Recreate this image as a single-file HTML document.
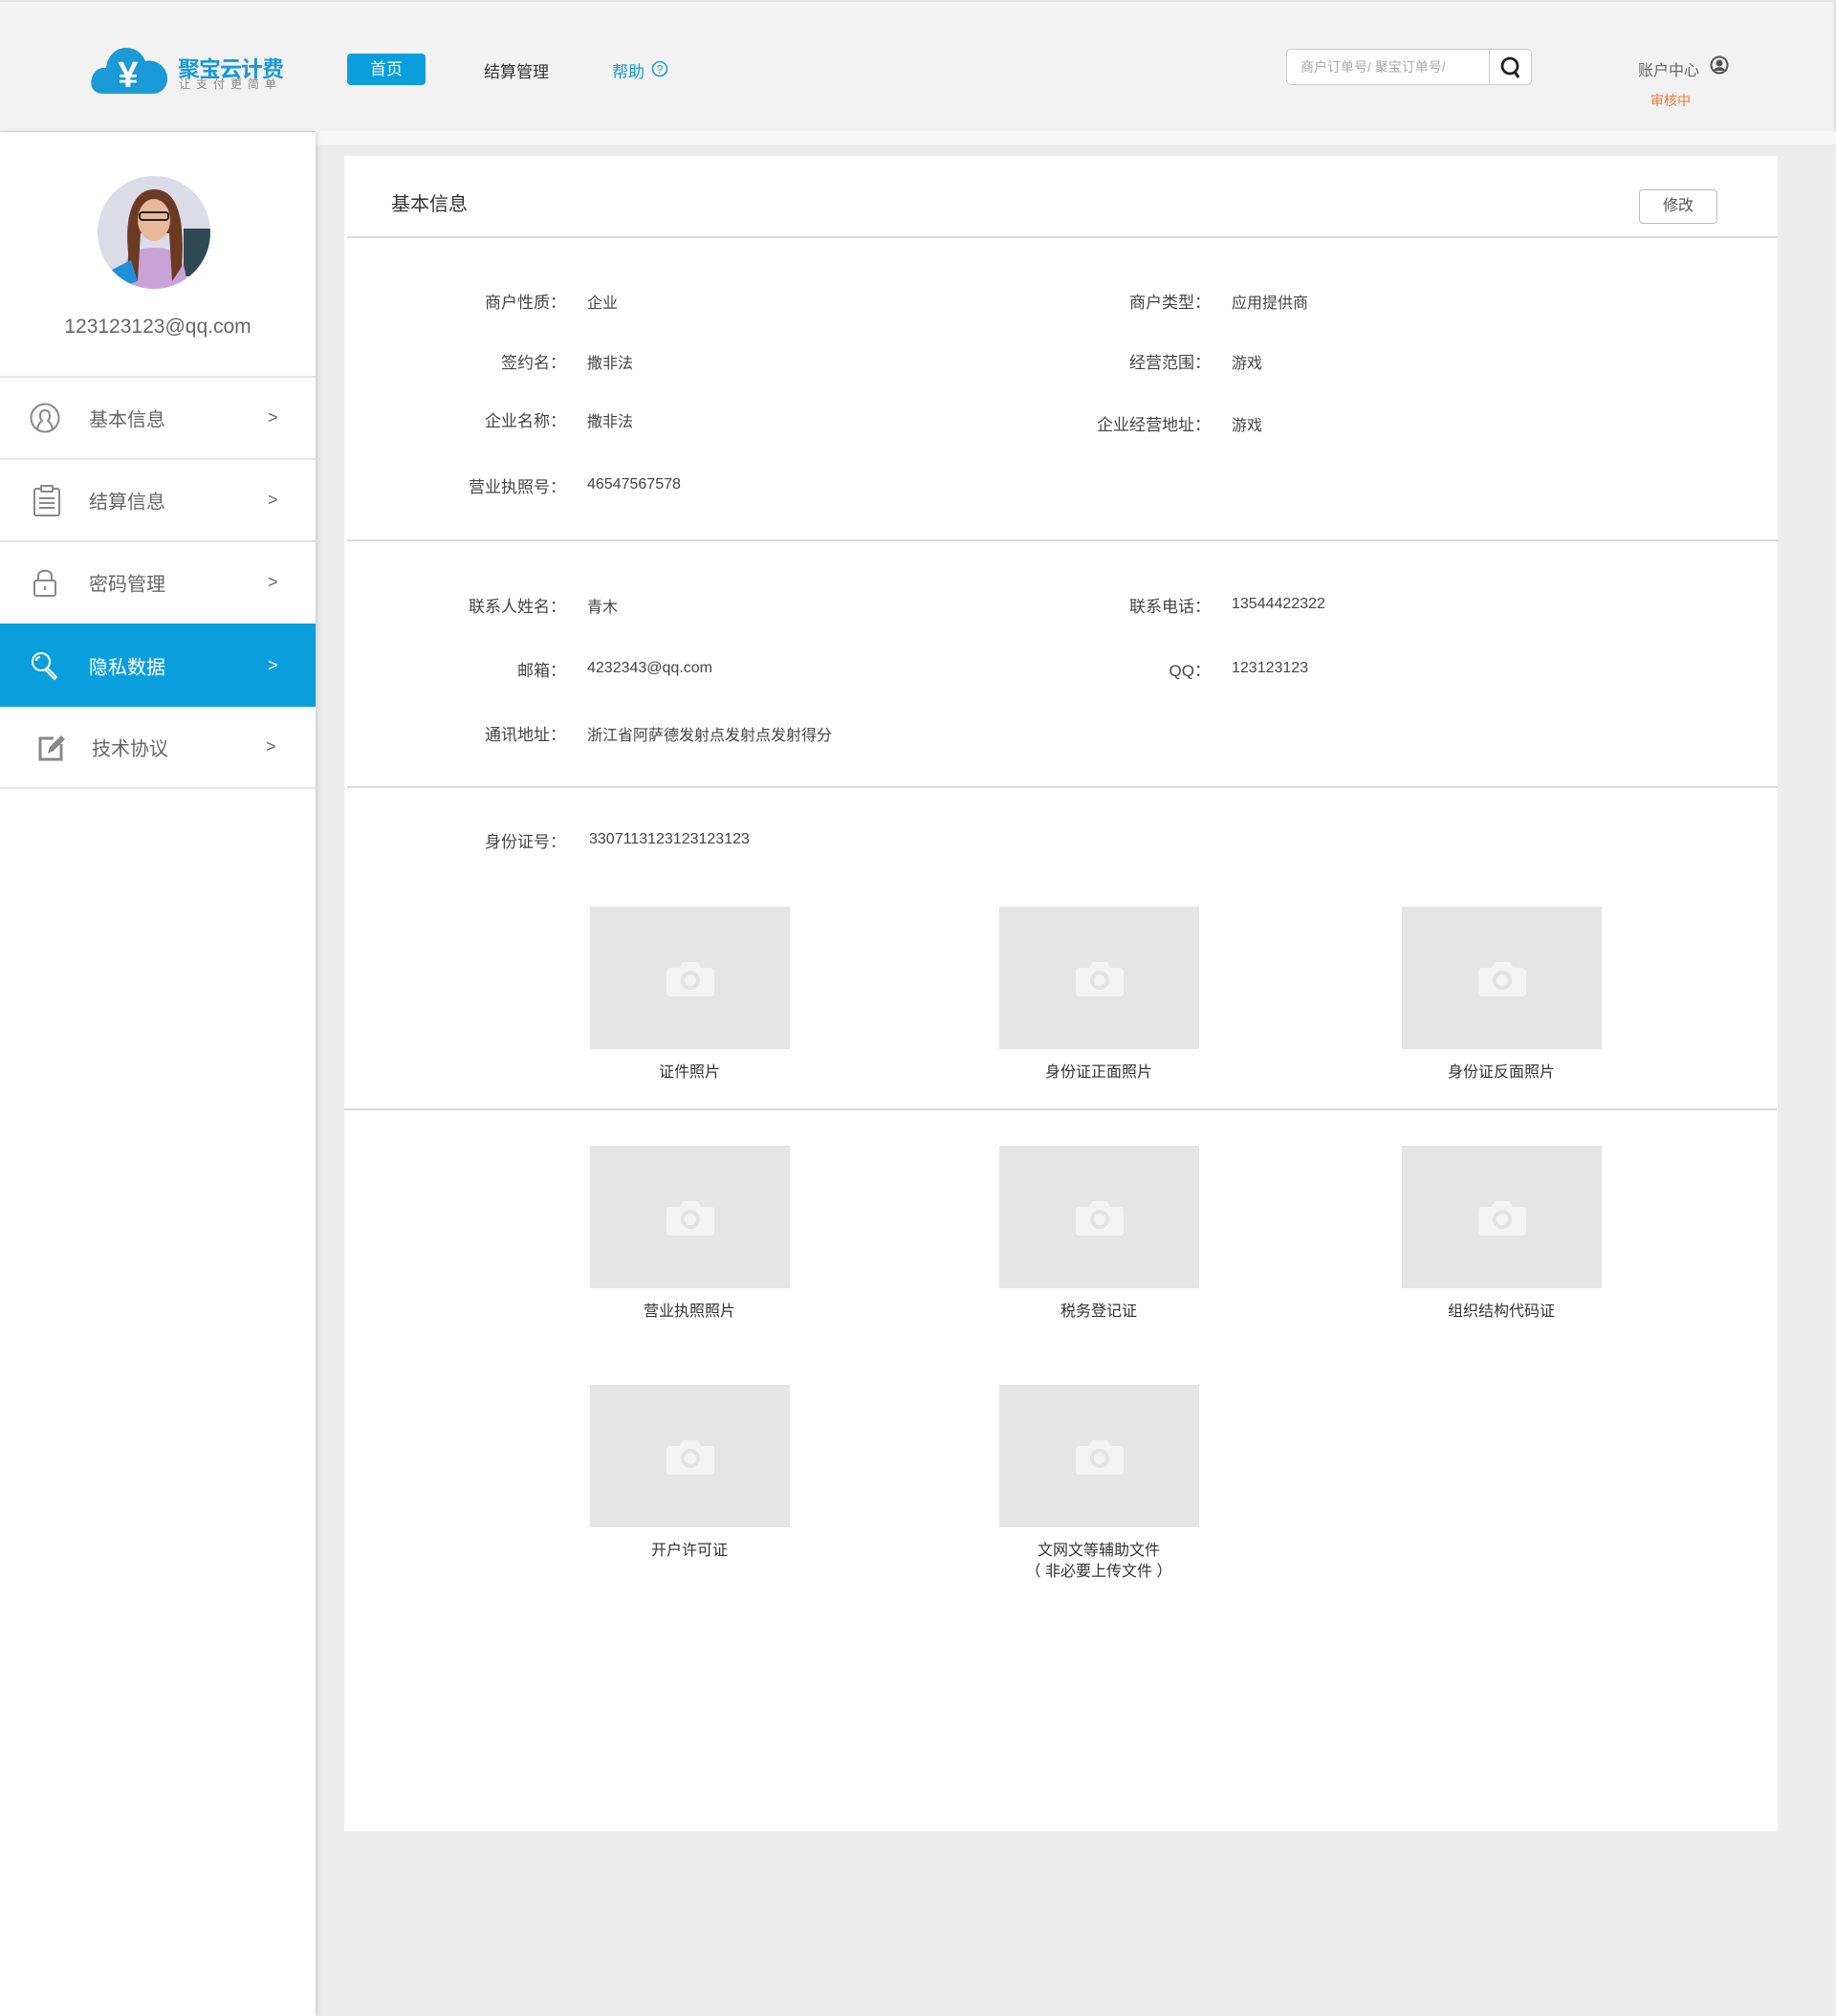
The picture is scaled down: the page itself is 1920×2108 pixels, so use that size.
<!DOCTYPE html>
<html><head><meta charset="utf-8">
<style>
*{margin:0;padding:0;box-sizing:border-box}
body{width:1920px;height:2108px;background:#ececec;font-family:"Liberation Sans","Noto Sans CJK SC",sans-serif;position:relative;overflow:hidden;color:#333}
.a{position:absolute;white-space:nowrap}
#hdr{position:absolute;left:0;top:0;width:1920px;height:137px;background:#f2f2f2;border-top:2px solid #e4e4e4;border-right:2px solid #e0e0e0;box-shadow:0 2px 3px rgba(0,0,0,.12)}
#strip{position:absolute;left:330px;top:137px;width:1590px;height:14px;background:#f7f7f7}
#side{position:absolute;left:0;top:138px;width:330px;height:1970px;background:#fff;box-shadow:2px 0 4px rgba(0,0,0,.12)}
.hl{position:absolute;left:0;width:330px;height:2px;background:#e6e6e6}
.mi{position:absolute;left:0;width:330px;height:84px;font-size:20px;color:#666}
.mi .t{position:absolute;left:93px;top:50%;transform:translateY(-50%)}
.mi .g{position:absolute;left:280px;top:50%;transform:translateY(-50%);font-size:18px}
.mi svg{position:absolute;left:30px;top:50%;transform:translateY(-50%)}
#card{position:absolute;left:360px;top:163px;width:1499px;height:1752px;background:#fff}
.ln{position:absolute;left:363px;width:1496px;height:2px;background:#dcdcdc}
.lb{position:absolute;font-size:17px;color:#444;text-align:right;width:300px;white-space:nowrap}
.v{position:absolute;font-size:16px;color:#444;white-space:nowrap}
.n{margin-top:2px}
.ph{position:absolute;width:209px;height:149px;background:#e5e5e5}
.ph svg{position:absolute;left:80px;top:56px}
.cap{position:absolute;width:300px;text-align:center;font-size:16px;color:#333;line-height:22px}
</style></head><body>
<div id="hdr"></div>
<svg class="a" style="left:94px;top:44px" width="84" height="54" viewBox="0 0 84 54">
<path d="M14 54 C2 54 0 44 2 38 C4 30 10 26 17 27 C18 16 26 6 38 6 C48 6 55 12 58 20 C66 18 76 22 80 32 C84 44 76 54 66 54 Z" fill="#1a9ad6"/>
<text x="40" y="47" text-anchor="middle" font-size="38" font-weight="bold" fill="#fff" font-family="Liberation Sans,sans-serif">¥</text>
</svg>
<div class="a" style="left:186px;top:53px;font-size:23px;font-weight:bold;color:#1a9ad6;letter-spacing:-1px">聚宝云计费</div>
<div class="a" style="left:187px;top:79px;font-size:12px;color:#888;letter-spacing:6px">让支付更简单</div>
<div class="a" style="left:363px;top:56px;width:82px;height:33px;background:#0a9fdc;border-radius:4px;color:#fff;font-size:17px;text-align:center;line-height:33px">首页</div>
<div class="a" style="left:506px;top:61px;font-size:17px;color:#333">结算管理</div>
<div class="a" style="left:640px;top:61px;font-size:17px;color:#1a9ad6">帮助</div>
<svg class="a" style="left:681px;top:63px" width="18" height="18" viewBox="0 0 18 18"><circle cx="9" cy="9" r="7.5" fill="none" stroke="#1a9ad6" stroke-width="1.5"/><text x="9" y="13.5" text-anchor="middle" font-size="12" fill="#1a9ad6" font-family="Liberation Sans,sans-serif">?</text></svg>
<div class="a" style="left:1345px;top:51px;width:257px;height:38px;border:1px solid #ccc;border-radius:5px;background:#fff"></div>
<div class="a" style="left:1557px;top:52px;width:1px;height:36px;background:#ccc"></div>
<div class="a" style="left:1360px;top:60px;font-size:14px;color:#aaa">商户订单号/ 聚宝订单号/</div>
<svg class="a" style="left:1568px;top:58px" width="24" height="26" viewBox="0 0 24 26"><circle cx="11" cy="11" r="8" fill="none" stroke="#222" stroke-width="2.8"/><path d="M16 17 L20 23" stroke="#222" stroke-width="3"/></svg>
<div class="a" style="left:1713px;top:60px;font-size:16px;color:#666">账户中心</div>
<svg class="a" style="left:1788px;top:58px" width="20" height="20" viewBox="0 0 20 20"><circle cx="10" cy="10" r="8.5" fill="none" stroke="#555" stroke-width="2"/><circle cx="10" cy="8" r="3.5" fill="#555"/><path d="M4 16 C5 11 15 11 16 16 Z" fill="#555"/></svg>
<div class="a" style="left:1726px;top:95px;font-size:14px;color:#ee7a3c">审核中</div>

<div id="strip"></div>
<div id="side">
  <svg class="a" style="left:102px;top:46px" width="118" height="118" viewBox="0 0 118 118">
    <defs><clipPath id="c"><circle cx="59" cy="59" r="59"/></clipPath></defs>
    <g clip-path="url(#c)">
      <rect width="118" height="118" fill="#dcdce8"/>
      <rect x="90" y="55" width="30" height="50" fill="#2f4a55"/>
      <path d="M25 118 C25 85 35 75 59 75 C83 75 93 85 93 118 Z" fill="#c9a3d8"/>
      <path d="M32 80 C28 40 38 14 59 14 C82 14 92 40 88 95 L78 110 L75 60 L45 60 L42 110 L32 100 Z" fill="#6b3a22"/>
      <ellipse cx="59" cy="46" rx="17" ry="22" fill="#e8b89a"/>
      <rect x="44" y="38" width="30" height="8" rx="3" fill="none" stroke="#222" stroke-width="2"/>
      <path d="M15 98 L35 88 L42 110 L20 118 Z" fill="#1e8fd8"/>
    </g>
  </svg>
  <div class="a" style="left:0;width:330px;text-align:center;top:192px;font-size:21px;color:#666">123123123@qq.com</div>
</div>
<div class="hl" style="top:393px"></div>
<div class="mi" style="top:395px">
  <svg width="34" height="34" viewBox="0 0 34 34"><circle cx="17" cy="17" r="14.5" fill="none" stroke="#888" stroke-width="2"/><path d="M9 29 C10 22 13 21 14 20 C11 17 11 9 17 9 C23 9 23 17 20 20 C21 21 24 22 25 29" fill="none" stroke="#888" stroke-width="2"/></svg>
  <span class="t">基本信息</span><span class="g">&gt;</span></div>
<div class="hl" style="top:479px"></div>
<div class="mi" style="top:481px">
  <svg width="34" height="34" viewBox="0 0 34 34"><rect x="6" y="5" width="26" height="28" rx="2" fill="none" stroke="#888" stroke-width="2"/><rect x="13" y="2" width="12" height="6" rx="1" fill="#fff" stroke="#888" stroke-width="2"/><path d="M11 15h16M11 20h16M11 25h16" stroke="#888" stroke-width="2"/></svg>
  <span class="t">结算信息</span><span class="g">&gt;</span></div>
<div class="hl" style="top:565px"></div>
<div class="mi" style="top:567px">
  <svg width="34" height="34" viewBox="0 0 34 34"><path d="M10 15 V10 C10 3 24 3 24 10 V15" fill="none" stroke="#888" stroke-width="2"/><rect x="6" y="15" width="22" height="16" rx="2" fill="none" stroke="#888" stroke-width="2"/><path d="M17 21v4" stroke="#888" stroke-width="2"/></svg>
  <span class="t">密码管理</span><span class="g">&gt;</span></div>
<div class="mi" style="top:652px;height:87px;background:#0a9fdc;color:#fff">
  <svg width="34" height="34" viewBox="0 0 34 34"><circle cx="13" cy="13" r="9" fill="none" stroke="#fff" stroke-width="2"/><path d="M19 19 L29 29 L27 31 L17 21" fill="none" stroke="#fff" stroke-width="2"/><path d="M8 12 C8 9 10 8 12 8" stroke="#fff" stroke-width="2" fill="none"/></svg>
  <span class="t">隐私数据</span><span class="g">&gt;</span></div>
<div class="mi" style="top:739px">
  <svg width="34" height="34" viewBox="0 0 34 34" style="left:38px"><path d="M26 14 V30 H4 V8 H18" fill="none" stroke="#888" stroke-width="3"/><path d="M12 24 L14 17 L26 5 L30 9 L18 21 Z" fill="#888"/></svg>
  <span class="t" style="left:96px">技术协议</span><span class="g" style="left:278px">&gt;</span></div>
<div class="hl" style="top:823px"></div>

<div id="card"></div>
<div class="a" style="left:409px;top:197px;font-size:20px;color:#333">基本信息</div>
<div class="a" style="left:1714px;top:198px;width:82px;height:36px;border:1px solid #bbb;border-radius:4px;text-align:center;line-height:34px;font-size:16px;color:#555">修改</div>
<div class="ln" style="top:247px"></div>

<div class="lb" style="left:292px;top:302px">商户性质：</div><div class="v" style="left:614px;top:303px">企业</div>
<div class="lb" style="left:966px;top:302px">商户类型：</div><div class="v" style="left:1288px;top:303px">应用提供商</div>
<div class="lb" style="left:292px;top:365px">签约名：</div><div class="v" style="left:614px;top:366px">撒非法</div>
<div class="lb" style="left:966px;top:365px">经营范围：</div><div class="v" style="left:1288px;top:366px">游戏</div>
<div class="lb" style="left:292px;top:426px">企业名称：</div><div class="v" style="left:614px;top:427px">撒非法</div>
<div class="lb" style="left:966px;top:430px">企业经营地址：</div><div class="v" style="left:1288px;top:431px">游戏</div>
<div class="lb" style="left:292px;top:495px">营业执照号：</div><div class="v n" style="left:614px;top:496px">46547567578</div>
<div class="ln" style="top:564px"></div>

<div class="lb" style="left:292px;top:620px">联系人姓名：</div><div class="v" style="left:614px;top:621px">青木</div>
<div class="lb" style="left:966px;top:620px">联系电话：</div><div class="v n" style="left:1288px;top:621px">13544422322</div>
<div class="lb" style="left:292px;top:687px">邮箱：</div><div class="v n" style="left:614px;top:688px">4232343@qq.com</div>
<div class="lb" style="left:966px;top:687px">QQ：</div><div class="v n" style="left:1288px;top:688px">123123123</div>
<div class="lb" style="left:292px;top:754px">通讯地址：</div><div class="v" style="left:614px;top:755px">浙江省阿萨德发射点发射点发射得分</div>
<div class="ln" style="top:822px"></div>

<div class="lb" style="left:292px;top:866px">身份证号：</div><div class="v n" style="left:616px;top:867px">3307113123123123123</div>

<div class="ph" style="left:617px;top:948px"><svg width="50" height="38" viewBox="0 0 50 38"><path d="M4 8 H14 L17 2 H33 L36 8 H46 Q50 8 50 12 V34 Q50 38 46 38 H4 Q0 38 0 34 V12 Q0 8 4 8Z" fill="#f3f3f3"/><circle cx="25" cy="21" r="8" fill="none" stroke="#e3e3e3" stroke-width="4"/></svg></div>
<div class="cap" style="left:571px;top:1111px">证件照片</div>
<div class="ph" style="left:1045px;top:948px"><svg width="50" height="38" viewBox="0 0 50 38"><path d="M4 8 H14 L17 2 H33 L36 8 H46 Q50 8 50 12 V34 Q50 38 46 38 H4 Q0 38 0 34 V12 Q0 8 4 8Z" fill="#f3f3f3"/><circle cx="25" cy="21" r="8" fill="none" stroke="#e3e3e3" stroke-width="4"/></svg></div>
<div class="cap" style="left:999px;top:1111px">身份证正面照片</div>
<div class="ph" style="left:1466px;top:948px"><svg width="50" height="38" viewBox="0 0 50 38"><path d="M4 8 H14 L17 2 H33 L36 8 H46 Q50 8 50 12 V34 Q50 38 46 38 H4 Q0 38 0 34 V12 Q0 8 4 8Z" fill="#f3f3f3"/><circle cx="25" cy="21" r="8" fill="none" stroke="#e3e3e3" stroke-width="4"/></svg></div>
<div class="cap" style="left:1420px;top:1111px">身份证反面照片</div>
<div class="ln" style="top:1159px;left:360px;width:1498px"></div>

<div class="ph" style="left:617px;top:1198px"><svg width="50" height="38" viewBox="0 0 50 38"><path d="M4 8 H14 L17 2 H33 L36 8 H46 Q50 8 50 12 V34 Q50 38 46 38 H4 Q0 38 0 34 V12 Q0 8 4 8Z" fill="#f3f3f3"/><circle cx="25" cy="21" r="8" fill="none" stroke="#e3e3e3" stroke-width="4"/></svg></div>
<div class="cap" style="left:571px;top:1361px">营业执照照片</div>
<div class="ph" style="left:1045px;top:1198px"><svg width="50" height="38" viewBox="0 0 50 38"><path d="M4 8 H14 L17 2 H33 L36 8 H46 Q50 8 50 12 V34 Q50 38 46 38 H4 Q0 38 0 34 V12 Q0 8 4 8Z" fill="#f3f3f3"/><circle cx="25" cy="21" r="8" fill="none" stroke="#e3e3e3" stroke-width="4"/></svg></div>
<div class="cap" style="left:999px;top:1361px">税务登记证</div>
<div class="ph" style="left:1466px;top:1198px"><svg width="50" height="38" viewBox="0 0 50 38"><path d="M4 8 H14 L17 2 H33 L36 8 H46 Q50 8 50 12 V34 Q50 38 46 38 H4 Q0 38 0 34 V12 Q0 8 4 8Z" fill="#f3f3f3"/><circle cx="25" cy="21" r="8" fill="none" stroke="#e3e3e3" stroke-width="4"/></svg></div>
<div class="cap" style="left:1420px;top:1361px">组织结构代码证</div>

<div class="ph" style="left:617px;top:1448px"><svg width="50" height="38" viewBox="0 0 50 38"><path d="M4 8 H14 L17 2 H33 L36 8 H46 Q50 8 50 12 V34 Q50 38 46 38 H4 Q0 38 0 34 V12 Q0 8 4 8Z" fill="#f3f3f3"/><circle cx="25" cy="21" r="8" fill="none" stroke="#e3e3e3" stroke-width="4"/></svg></div>
<div class="cap" style="left:571px;top:1611px">开户许可证</div>
<div class="ph" style="left:1045px;top:1448px"><svg width="50" height="38" viewBox="0 0 50 38"><path d="M4 8 H14 L17 2 H33 L36 8 H46 Q50 8 50 12 V34 Q50 38 46 38 H4 Q0 38 0 34 V12 Q0 8 4 8Z" fill="#f3f3f3"/><circle cx="25" cy="21" r="8" fill="none" stroke="#e3e3e3" stroke-width="4"/></svg></div>
<div class="cap" style="left:999px;top:1611px">文网文等辅助文件<br>（ 非必要上传文件 ）</div>
</body></html>
